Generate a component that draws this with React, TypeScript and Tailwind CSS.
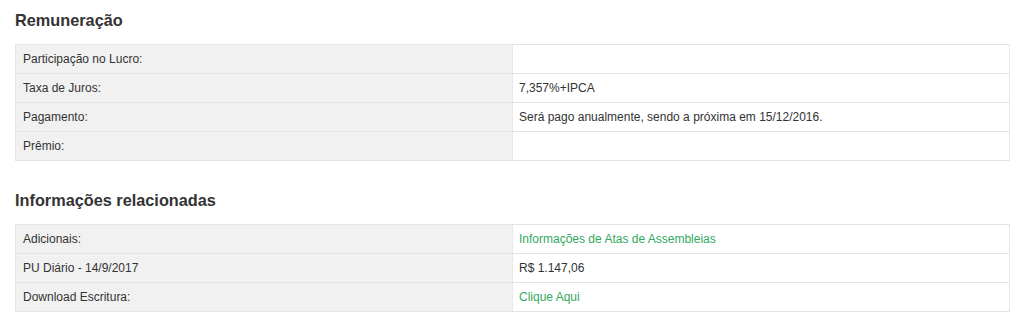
import React from "react";

type Row = { label: string; value?: string; link?: boolean };

const rem: Row[] = [
  { label: "Participação no Lucro:" },
  { label: "Taxa de Juros:", value: "7,357%+IPCA" },
  { label: "Pagamento:", value: "Será pago anualmente, sendo a próxima em 15/12/2016." },
  { label: "Prêmio:" },
];

const info: Row[] = [
  { label: "Adicionais:", value: "Informações de Atas de Assembleias", link: true },
  { label: "PU Diário - 14/9/2017", value: "R$ 1.147,06" },
  { label: "Download Escritura:", value: "Clique Aqui", link: true },
];

function Table({ rows }: { rows: Row[] }) {
  return (
    <div className="border-b border-[#e4e4e4]">
      {rows.map((r, i) => (
        <div key={i} className="grid grid-cols-[497px_1fr] border-t border-[#e4e4e4] h-[29px]">
          <div className="bg-[#f1f1f1] border-l border-[#e4e4e4] pl-[7px] flex items-center text-[12px] text-[#333]">
            {r.label}
          </div>
          <div className="bg-white border-l border-r border-[#e8e8e8] pl-[6px] flex items-center text-[12px]">
            {r.value ? (
              r.link ? (
                <a className="text-[#33a960] cursor-pointer">{r.value}</a>
              ) : (
                <span className="text-[#333]">{r.value}</span>
              )
            ) : null}
          </div>
        </div>
      ))}
    </div>
  );
}

export default function App() {
  return (
    <div
      className="w-[1024px] h-[335px] bg-white pl-[15px] pr-[14px] overflow-hidden"
      style={{ fontFamily: '"Liberation Sans", Arial, sans-serif' }}
    >
      <h2 className="pt-[11px] mb-[15px] text-[16.3px] leading-[18px] font-bold text-[#333]">Remuneração</h2>
      <Table rows={rem} />
      <h2 className="mt-[30px] mb-[15px] text-[16.3px] leading-[18px] font-bold text-[#333]">Informações relacionadas</h2>
      <Table rows={info} />
    </div>
  );
}
